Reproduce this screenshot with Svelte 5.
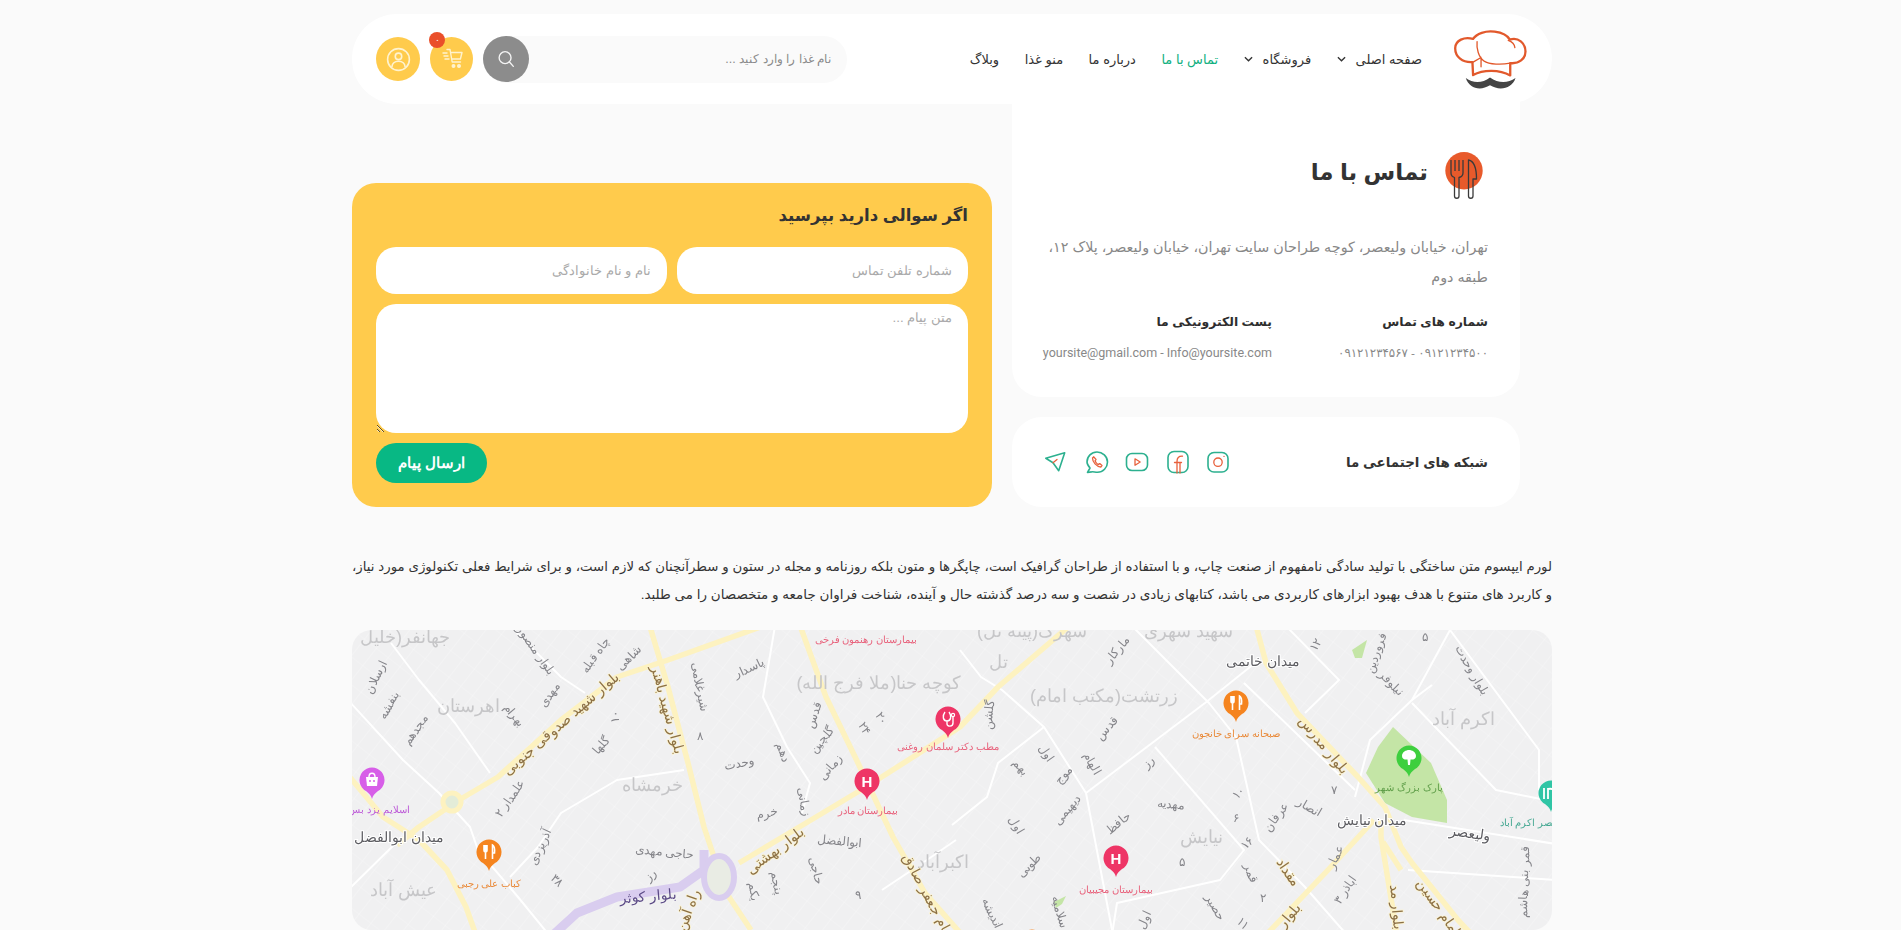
<script>
  const nav = [
    { t: 'صفحه اصلی', drop: true },
    { t: 'فروشگاه', drop: true },
    { t: 'تماس با ما', active: true },
    { t: 'درباره ما' },
    { t: 'منو غذا' },
    { t: 'وبلاگ' }
  ];
  const yellow = [
    '296,-10 316,57 336,133 352,197 363,230 377,267 399,300',
    '411,-4 316,30 265,47 209,90 146,147 107,170 67,197 45,215',
    '-4,145 31,187 67,210 95,240 114,277 124,305',
    '446,-10 474,67 506,133 541,207 573,263 610,305',
    '387,233 454,193 514,157 608,97 646,57 722,-8',
    '903,-8 914,33 945,83 1006,147 1033,177 1049,217 1060,233 1106,290 1120,305',
    '1022,190 976,240 914,305',
    '1029,190 1029,207 1045,305',
    '1031,212 1049,240'
  ];
  const white = [
    '39,13 67,50 103,93 138,143',
    '158,-4 209,47 233,63',
    '-4,70 51,130 87,163 118,197 126,220 166,267 197,305',
    '-4,260 47,210',
    '332,140 265,150 209,183 186,217 158,247',
    '423,-4 411,67 435,117 458,153 450,183',
    '608,20 629,47 650,60 692,97 734,163 761,305',
    '692,97 646,133 635,167 600,195',
    '734,163 853,73 903,33',
    '780,-4 857,73 884,107 907,210 953,257 995,305',
    '803,117 892,220 868,250 765,273 760,305',
    '892,53 1003,160',
    '934,-4 987,50 953,83',
    '1098,0 1060,70 1018,110 1003,167',
    '1060,73 1144,160 1204,172',
    '1098,0 1187,120 1187,160',
    '1052,190 1204,214',
    '1056,240 1204,250',
    '1080,55 1060,70',
    '560,240 530,260',
    '604,210 572,232'
  ];
  const labels = [
    ['جهانفر(خلیل',53,7,0,'area'],['اهرستان',116,76,0,'area'],['خرمشاه',300,155,0,'area'],['عیش آباد',51,260,0,'area'],
    ['کوچه حنا(ملا فرج الله)',527,53,0,'area'],['زرتشت(مکتب امام)',752,66,0,'area'],['اکبرآباد',591,232,0,'area'],['نیایش',849,207,0,'area'],
    ['اکرم آباد',1111,89,0,'area'],['تل',646,32,0,'area'],['شهید شهری',836,1,0,'area'],['شهرک(پیته تل)',680,1,0,'area'],
    ['بلوار شهید صدوقی جنوبی',209,93,-41,'road'],['بلوار شهید باهنر',316,80,75,'road'],['بلوار بهشتی',423,220,-37,'road'],
    ['امام جعفر صادق',577,267,62,'road'],['راه آهن',336,280,-70,'road'],['بلوار مدرس',972,115,50,'road'],['امام حسین',1087,277,55,'road'],
    ['بلوار مد',1045,277,85,'road'],['بلوار',937,285,-50,'road'],['مقداد',937,242,55,'road'],['بلوار کوثر',296,266,-5,'kowsar'],
    ['میدان ابوالفضل',47,207,0,'sq'],['میدان خاتمی',911,31,0,'sq'],['میدان نیایش',1020,190,0,'sq'],['ولیعصر',1118,203,8,'sq'],
    ['بلوار وحدت',1120,40,60,'st'],['ارسلان',24,47,-65,'st'],['بنفشه',37,75,-60,'st'],['مجدهم',63,100,-55,'st'],['بلوار منصور',184,20,55,'st'],
    ['چاه قبله',243,25,-55,'st'],['شاهی',277,28,-45,'st'],['مهدی',197,65,-55,'st'],['بهرام',162,85,50,'st'],['شیرغلامی',348,57,80,'st'],
    ['پاسدار',397,38,-25,'st'],['۸',348,106,0,'st'],['۱۰',263,87,-90,'st'],['گلها',249,115,-50,'st'],['علمدار ۲',158,168,-55,'st'],
    ['آذریزدی',188,217,-65,'st'],['حاجی مهدی',312,222,5,'st'],['۳۸',205,250,45,'st'],['رز',298,245,-45,'st'],['وحدت',387,133,-10,'st'],
    ['خرم',415,183,-10,'st'],['دهم',431,122,70,'st'],['زمانی',452,172,80,'st'],['گلچین',470,110,-50,'st'],['زمانی',478,137,-50,'st'],
    ['قدس',462,85,-70,'st'],['۲۴',512,98,60,'st'],['۲۰',529,88,60,'st'],['ابوالفضل',487,211,5,'st'],['حاجی',464,240,75,'st'],
    ['پنجم',425,253,80,'st'],['یکم',402,262,85,'st'],['۹',506,265,0,'st'],['مارکار',765,20,-50,'st'],['۱۲',964,15,-60,'st'],
    ['فروردین',1024,23,-70,'st'],['۵',1073,7,0,'st'],['نیلوفر',1039,53,45,'st'],['قدس',755,98,-50,'st'],['گلشن',637,85,-85,'st'],
    ['اول',694,123,55,'st'],['بهم',669,137,50,'st'],['موج',711,145,-50,'st'],['الهام',740,133,60,'st'],['رز',796,132,-45,'st'],
    ['دیهیمی',715,180,-50,'st'],['اول',664,195,60,'st'],['طوبی',677,235,-45,'st'],['حافظ',766,193,-40,'st'],['مهدیه',819,174,5,'st'],
    ['۱۰',886,163,-45,'st'],['۶',884,188,0,'st'],['عرفان',924,187,-55,'st'],['انصار',957,177,30,'st'],['۷',982,160,0,'st'],
    ['۱۶',895,213,-50,'st'],['۵',830,232,0,'st'],['عمار',983,227,-65,'st'],['قمر',899,243,70,'st'],['۲',911,268,0,'st'],
    ['اباذر ۳',993,260,-55,'st'],['سلامیه',708,282,75,'st'],['اندیشه',640,283,65,'st'],['اول',792,290,-65,'st'],['حصیر',863,277,60,'st'],
    ['۱۱',891,293,45,'st'],['قمر بنی هاشم',1172,252,-88,'st'],
    ['بیمارستان رهنمون فرخی',514,9,0,'hos'],['بیمارستان مادر',516,180,0,'hos'],['مطب دکتر سلمان روغنی',596,116,0,'hos'],['بیمارستان مجیبیان',764,259,0,'hos'],
    ['اسلایم یزد بس',27,179,0,'shop'],['کباب علی رجبی',137,253,0,'food'],['صبحانه سرای خانجون',884,103,0,'food'],
    ['پارک بزرگ شهر',1057,157,0,'park'],['قصر اکرم آباد',1177,192,0,'teal']
  ];
  const pins = [
    { x: 20, y: 150, c: '#d75ee8', g: 'bag' },
    { x: 137, y: 222, c: '#f5841f', g: 'fork' },
    { x: 515, y: 151, c: '#ee3566', g: 'H' },
    { x: 596, y: 89, c: '#ee3566', g: 'doc' },
    { x: 884, y: 73, c: '#f5841f', g: 'fork' },
    { x: 1057, y: 128, c: '#3ecf3e', g: 'tree' },
    { x: 764, y: 228, c: '#ee3566', g: 'H' },
    { x: 1199, y: 163, c: '#30c5a5', g: 'tea' },
    { x: 680, y: 312, c: '#f5841f', g: 'fork' }
  ];
</script>

<div class="page">
  <header class="top">
    <svg class="logo" viewBox="40 25 225 190" aria-label="logo">
      <g fill="#fff" stroke="#e2592c" stroke-width="7" stroke-linejoin="round" stroke-linecap="round">
        <path d="M98 128C68 130 46 112 46 86C46 62 74 50 100 58C110 42 138 32 165 36C188 39 204 48 211 60C236 52 258 70 258 96C258 118 238 134 212 131L212 168C180 150 130 150 100 167Z"/>
        <path fill="none" stroke-width="4" d="M100 128L124 114M212 131C186 136 150 136 132 124C116 112 110 86 112 66M206 62C218 66 225 74 226 84M124 114L124 142"/>
      </g>
      <path fill="#444" d="M78 176C100 192 128 192 151 174C176 192 204 192 228 176C218 208 180 216 151 198C122 216 88 208 78 176Z"/>
    </svg>
    <nav class="nav">
      {#each nav as n}
        <a class="link" class:active={n.active} href="#top">
          {n.t}
          {#if n.drop}
            <svg class="chev" viewBox="0 0 10 6"><path d="M1 1l4 4 4-4" fill="none" stroke="#333" stroke-width="1.5"/></svg>
          {/if}
        </a>
      {/each}
    </nav>
    <div class="tools">
      <div class="search">
        <input class="q" placeholder="نام غذا را وارد کنید ..." />
        <button class="go" aria-label="جستجو">
          <svg viewBox="0 0 24 24" width="22" height="22" fill="none" stroke="#f4f4f4" stroke-width="1.5" stroke-linecap="round"><circle cx="11" cy="10.5" r="6.5"/><path d="M15.8 15.3L20 20"/></svg>
        </button>
      </div>
      <button class="round cart" aria-label="سبد خرید">
        <svg viewBox="0 0 24 24" width="24" height="24" fill="none" stroke="#fff3cf" stroke-width="1.4" stroke-linecap="round" stroke-linejoin="round">
          <path d="M7 2.5h3l2.2 12.5h8.3M11 5.5h11l-1.6 6.5H12M3 6h4M4 9h4M5 12h4"/>
          <circle cx="13.5" cy="19" r="1.3" fill="#fff3cf"/><circle cx="19" cy="19" r="1.3" fill="#fff3cf"/>
        </svg>
        <span class="badge">۰</span>
      </button>
      <button class="round" aria-label="حساب کاربری">
        <svg viewBox="0 0 28 28" width="25" height="25" fill="none" stroke="#fff3cf" stroke-width="1.8">
          <circle cx="14" cy="14" r="12.2"/><circle cx="14" cy="10.5" r="3.6"/><path d="M6.5 22.5C7 18 10 16 14 16S21 18 21.5 22.5"/>
        </svg>
      </button>
    </div>
  </header>

  <section class="row">
    <div class="col">
      <div class="card info">
        <div class="head">
          <svg class="dish" viewBox="0 0 38 47" fill="none" stroke="#3a3a3a" stroke-width="1.3" stroke-linejoin="round">
            <circle cx="19" cy="18.7" r="18.7" fill="#e85a2b" stroke="none"/>
            <path d="M6 8V21C6 23.5 8 25 9.5 25.5V44C9.5 47 14 47 14 44V25.5C16 25 18 23.5 18 21V8M10 8V19M14 8V19"/>
            <path d="M24 44V8C29 9 32 16 32 27H28.5V44C28.5 47 24 47 24 44Z" transform="translate(-.5 0)"/>
          </svg>
          <h1>تماس با ما</h1>
        </div>
        <p class="addr">تهران، خیابان ولیعصر، کوچه طراحان سایت تهران، خیابان ولیعصر، پلاک ۱۲، طبقه دوم</p>
        <div class="cols">
          <div>
            <h3>شماره های تماس</h3>
            <p class="val phone">۰۹۱۲۱۲۳۴۵۰۰ - ۰۹۱۲۱۲۳۴۵۶۷</p>
          </div>
          <div>
            <h3>پست الکترونیکی ما</h3>
            <p class="val mail">yoursite@gmail.com - Info@yoursite.com</p>
          </div>
        </div>
      </div>
      <div class="card social">
        <h2>شبکه های اجتماعی ما</h2>
        <div class="icons">
          <svg viewBox="0 0 24 24"><rect class="t" x="2" y="2.5" width="20" height="19.5" rx="6"/><circle class="o" cx="12" cy="12.2" r="4.2"/><circle cx="18" cy="6.4" r=".7" fill="#e8603c"/></svg>
          <svg viewBox="0 0 24 24"><rect class="t" x="2" y="1.5" width="20" height="21" rx="6"/><path class="o" d="M11 23V11.5C11 8 12.5 6 16.5 6.2M8.5 12.5H15.5M14 23V12.5"/></svg>
          <svg viewBox="0 0 24 24"><rect class="t" x="1.5" y="3.5" width="21" height="17" rx="5.5"/><path class="o" d="M10 8.8L15.2 12L10 15.2Z"/></svg>
          <svg viewBox="0 0 24 24"><path class="t" d="M2.5 22.5L5 18C3.5 16.2 2 14.4 2 12C2 6.5 6.5 2 12 2S22.5 6.5 22.5 12S18 22.3 12.5 22.3C10 22.3 8 21.5 6.5 21.9Z"/><path class="o" d="M8.8 6.8L7.5 8C7.5 12 11.5 16.8 15.8 17L17 15.6L14.7 13.6L13.3 14.6C11.8 13.8 10.6 12.4 10 10.8L11 9.5Z"/></svg>
          <svg viewBox="0 0 24 24"><path class="t" d="M20.7 2.7L1.8 8.3L9 12.7L14.7 20.7Z"/><path class="o" d="M9 12.7L13 9.5"/></svg>
        </div>
      </div>
    </div>

    <form class="ask">
      <h2>اگر سوالی دارید بپرسید</h2>
      <div class="pair">
        <input placeholder="شماره تلفن تماس" />
        <input placeholder="نام و نام خانوادگی" />
      </div>
      <textarea placeholder="متن پیام ..."></textarea>
      <button type="button" class="send">ارسال پیام</button>
    </form>
  </section>

  <div class="lorem">
    <p class="first">لورم ایپسوم متن ساختگی با تولید سادگی نامفهوم از صنعت چاپ، و با استفاده از طراحان گرافیک است، چاپگرها و متون بلکه روزنامه و مجله در ستون و سطرآنچنان که لازم است، و برای شرایط فعلی تکنولوژی مورد نیاز،</p>
    <p>و کاربرد های متنوع با هدف بهبود ابزارهای کاربردی می باشد، کتابهای زیادی در شصت و سه درصد گذشته حال و آینده، شناخت فراوان جامعه و متخصصان را می طلبد.</p>
  </div>

  <div class="map">
    <svg viewBox="0 0 1200 300" width="1200" height="300">
      <defs>
        <pattern id="g1" width="15" height="15" patternUnits="userSpaceOnUse" patternTransform="rotate(38)">
          <path d="M0 0V15" stroke="#fff" stroke-width=".8" opacity=".55"/>
        </pattern>
        <pattern id="g2" width="22" height="22" patternUnits="userSpaceOnUse" patternTransform="rotate(-52)">
          <path d="M0 0V22" stroke="#fff" stroke-width=".8" opacity=".4"/>
        </pattern>
      </defs>
      <rect width="1200" height="300" fill="#f0f0f1"/>
      <rect width="1200" height="300" fill="url(#g1)"/>
      <rect width="1200" height="300" fill="url(#g2)"/>
      <polygon points="1041,97 1079,133 1095,170 1095,193 1060,187 1033,173 1014,143 1026,117" fill="#c4e5a6"/>
      <polygon points="1000,20 1015,10 1010,28 1003,28" fill="#c4e5a6"/>
      <polygon points="702,272 714,266 710,274 704,278" fill="#c4e5a6"/>
      {#each white as p}
        <polyline points={p} fill="none" stroke="#fff" stroke-width="2" stroke-linejoin="round"/>
      {/each}
      {#each yellow as p}
        <polyline points={p} fill="none" stroke="#fdf2c0" stroke-width="5.500" stroke-linejoin="round"/>
      {/each}
      <polyline points="201,305 225,283 265,267 328,257 352,240 352,220" fill="none" stroke="#d9cdef" stroke-width="9" stroke-linejoin="round"/>
      <ellipse cx="367" cy="247" rx="15" ry="21" fill="#e9ece4" stroke="#d9cdef" stroke-width="6"/>
      <circle cx="100" cy="172" r="9" fill="#e3ecd8" stroke="#fdf2c0" stroke-width="5"/>
      {#each labels as l}
        <text class={l[4]} transform="translate({l[1]} {l[2]}) rotate({l[3]})" text-anchor="middle" dominant-baseline="central">{l[0]}</text>
      {/each}
      {#each pins as p}
        <g transform="translate({p.x} {p.y})">
          <path fill={p.c} d="M0 19C-.8 15.5-2.5 13.8-6 11A12.5 12.5 0 1 1 6 11C2.5 13.8.8 15.5 0 19Z"/>
          {#if p.g === 'H'}
            <text class="pinH" text-anchor="middle" y="5.5">H</text>
          {:else if p.g === 'fork'}
            <path fill="none" stroke="#fff" stroke-width="1.6" d="M-5-7V-2C-5 0-3.5 0-3.5 0V7M-2-7V-2C-2 0-3.5 0-3.5 0M-3.5-7V0M3.5 7V-7C5.5-6 5.8-2 5.5 1H3.5"/>
          {:else if p.g === 'bag'}
            <path fill="#fff" d="M-6-3H6L5 6H-5Z"/><path fill="none" stroke="#fff" stroke-width="1.4" d="M-3-3C-3-8 3-8 3-3"/>
            <circle cx="-2" cy="1" r="1" fill={p.c}/><circle cx="2" cy="1" r="1" fill={p.c}/>
          {:else if p.g === 'tree'}
            <path fill="#fff" d="M-7-2C-7-6-3-8 0-8S7-6 7-2C7 1 4 2 1.500 1.500L1 7H-1L-1.500 1.500C-4 2-7 1-7-2Z"/>
          {:else if p.g === 'doc'}
            <path fill="none" stroke="#fff" stroke-width="1.4" d="M-3-7C-6-3-5 2-1 2C3 2 4-3 1-7M-1 2V5C-1 8 5 8 5 4V-2"/><circle cx="5" cy="-4" r="1.6" fill="none" stroke="#fff" stroke-width="1.2"/>
          {:else}
            <path fill="none" stroke="#fff" stroke-width="1.8" d="M-7-5V6M-3-5V6M-3-4C2-5 4-3 4 2V6"/>
          {/if}
        </g>
      {/each}
    </svg>
  </div>
</div>

<style>
  :global(html), :global(body) { margin: 0; height: 930px; overflow: hidden; background: #fafafa; }
  :global(*) { box-sizing: border-box; }
  .page { width: 1200px; margin-left: 352px; padding-top: 14px; direction: rtl; font-family: "Liberation Sans", "DejaVu Sans", sans-serif; color: #333; }
  h1, h2, h3, p { margin: 0; }

  .top { position: relative; z-index: 2; height: 90px; background: #fff; border-radius: 45px; display: flex; align-items: center; padding: 0 24px; }
  .logo { width: 75px; height: 63px; flex: none; margin-left: 31px; }
  .nav { display: flex; align-items: center; gap: 25.5px; font-size: 13px; }
  .link { color: #333; text-decoration: none; display: flex; align-items: center; gap: 10px; white-space: nowrap; }
  .link.active { color: #10b07f; }
  .chev { width: 9px; height: 6px; }
  .tools { margin-right: auto; display: flex; align-items: center; gap: 10px; }
  .search { width: 364px; height: 47px; border-radius: 24px; background: #fafafa; display: flex; align-items: center; }
  .q { flex: 1; min-width: 0; height: 47px; border: 0; background: transparent; padding: 0 16px; font: 12.45px "Liberation Sans", sans-serif; outline: 0; direction: rtl; }
  .q::placeholder { color: #8a8a8a; opacity: 1; }
  .go { width: 46px; height: 46px; border-radius: 50%; border: 0; padding: 0; background: #8c8c8c; display: flex; align-items: center; justify-content: center; }
  .round { position: relative; width: 44px; height: 44px; border-radius: 50%; border: 0; padding: 0; background: #ffcb4c; display: flex; align-items: center; justify-content: center; }
  .cart { width: 43px; }
  .badge { position: absolute; top: -5px; left: -1px; width: 16px; height: 16px; border-radius: 50%; background: #ea4f2a; color: #fff; font: 9px/16px "Liberation Sans", sans-serif; text-align: center; }

  .row { display: flex; align-items: flex-end; gap: 20px; margin-top: -20px; padding-right: 32px; }
  .col { width: 508px; flex: none; display: flex; flex-direction: column; gap: 20px; }
  .card { background: #fff; border-radius: 30px; padding: 32px; }
  .info { padding-top: 68px; border-radius: 0 0 30px 30px; }
  .head { display: flex; align-items: flex-start; gap: 17px; margin-right: -1px; padding-right: 6px; }
  .dish { width: 38px; height: 47px; flex: none; }
  .head h1 { font-size: 23px; line-height: 40px; font-weight: 700; color: #333; }
  .addr { margin-top: 33px; font-size: 14.3px; line-height: 30px; color: #888; }
  .cols { display: grid; grid-template-columns: 216px 1fr; margin-top: 18px; }
  .cols h3 { font-size: 12.4px; line-height: 24px; font-weight: 700; color: #2e2e2e; }
  .val { margin-top: 7px; font-size: 12.5px; line-height: 24px; color: #888; white-space: nowrap; }
  .phone { font-size: 11.8px; }
  .mail { font-family: Roboto, sans-serif; }
  .social { height: 90px; padding: 0 32px; display: flex; align-items: center; justify-content: space-between; }
  .social h2 { font-size: 13.4px; font-weight: 700; color: #333; }
  .icons { display: flex; gap: 16.500px; }
  .icons svg { width: 24px; height: 24px; fill: none; stroke-linejoin: round; stroke-linecap: round; }
  .t { stroke: #2db08f; stroke-width: 1.6; }
  .o { stroke: #e8603c; stroke-width: 1.3; }

  .ask { width: 640px; flex: none; height: 324px; background: #ffcb4c; border-radius: 24px; padding: 20px 24px 24px; }
  .ask h2 { font-size: 16.5px; line-height: 24px; font-weight: 700; color: #333; margin-bottom: 20px; }
  .pair { display: flex; gap: 10px; }
  .ask input, .ask textarea { display: block; width: 100%; border: 0; background: #fff; border-radius: 20px; outline: 0; font: 13.3px "Liberation Sans", sans-serif; direction: rtl; }
  .ask input { height: 47px; padding: 0 16px; }
  .ask textarea { height: 129px; margin-top: 10px; padding: 6px 16px; }
  .ask ::placeholder { color: #aaa; opacity: 1; }
  .send { display: block; width: 111px; height: 40px; margin: 10px auto 0 0; border: 0; border-radius: 20px; background: #08b884; color: #fff; font: 700 14.5px "Liberation Sans", sans-serif; }

  .lorem { margin-top: 46px; font-size: 13.5px; line-height: 28px; color: #333; }
  .first { font-size: 13.3px; text-align: justify; text-align-last: justify; }
  .map { margin-top: 21px; height: 300px; border-radius: 20px; overflow: hidden; }
  .map svg { display: block; filter: blur(.35px); }
  .map text { font-family: "Liberation Sans", sans-serif; direction: rtl; }
  .area { font-size: 18px; fill: #c6c6c8; }
  .road { font-size: 14px; fill: #8b6f45; paint-order: stroke; stroke: #fbf3d0; stroke-width: 1.5px; }
  .kowsar { font-size: 14px; fill: #5b4a86; }
  .sq { font-size: 14px; fill: #5d5d62; paint-order: stroke; stroke: #fff; stroke-width: 2px; }
  .st { font-size: 12px; fill: #85858a; }
  .hos { font-size: 10px; fill: #e8627c; }
  .shop { font-size: 10px; fill: #bd5ad8; }
  .food { font-size: 10px; fill: #e98a3a; }
  .park { font-size: 10px; fill: #5f9e49; }
  .teal { font-size: 10px; fill: #45a892; }
  .pinH { font: 700 15px "Liberation Sans", sans-serif; fill: #fff; }
</style>
